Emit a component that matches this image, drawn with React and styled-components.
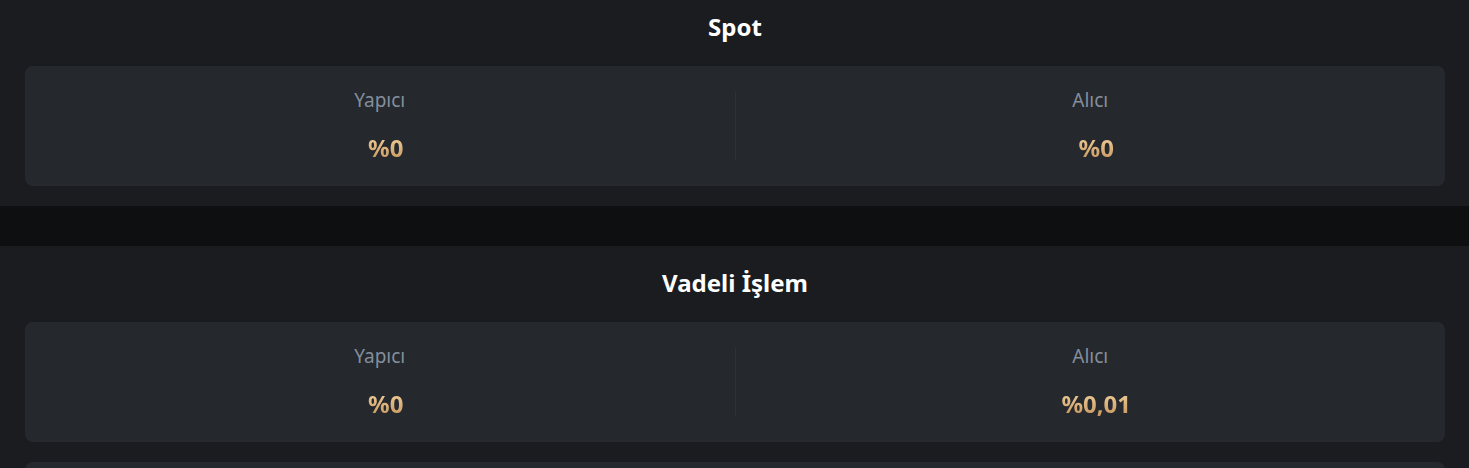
import React from 'react'
import styled, { createGlobalStyle } from 'styled-components'

const GlobalStyle = createGlobalStyle`
    html, body {
        margin: 0;
        padding: 0;
        background: #0e0f11;
        font-family: 'Noto Sans', 'Liberation Sans', Arial, sans-serif;
        overflow: hidden;
    }
`

const sections = [
    {
        id: 'spot',
        title: 'Spot',
        rows: [{ id: 1, maker: '%0', taker: '%0' }],
    },
    {
        id: 'futures',
        title: 'Vadeli İşlem',
        rows: [
            { id: 1, maker: '%0', taker: '%0,01' },
            { id: 2, maker: '%0,02', taker: '%0,05' },
        ],
    },
]

function App() {
    return (
        <>
            <GlobalStyle />
            <Page>
                {sections.map((section, i) => (
                    <Section key={section.id} first={i === 0}>
                        <Title>{section.title}</Title>
                        <CardList>
                            {section.rows.map((row) => (
                                <Card key={row.id}>
                                    <Column>
                                        <Label>Yapıcı</Label>
                                        <Value>{row.maker}</Value>
                                    </Column>
                                    <Divider />
                                    <Column>
                                        <Label>Alıcı</Label>
                                        <Value>{row.taker}</Value>
                                    </Column>
                                </Card>
                            ))}
                        </CardList>
                    </Section>
                ))}
            </Page>
        </>
    )
}

export default App

const Page = styled.div`
    display: flex;
    flex-direction: column;
    gap: 40px;
`

const Section = styled.section`
    background: #1b1c20;
    padding: ${(props) => (props.first ? '10px' : '20px')} 24px 20px 25px;
    display: flex;
    flex-direction: column;
    gap: 22px;
`

const Title = styled.h2`
    margin: 0;
    text-align: center;
    color: #ffffff;
    font-size: 24px;
    line-height: 34px;
    font-weight: 700;
`

const CardList = styled.div`
    display: flex;
    flex-direction: column;
    gap: 20px;
`

const Card = styled.div`
    background: #25282d;
    border-radius: 8px;
    height: 120px;
    display: flex;
    align-items: center;
`

const Column = styled.div`
    flex: 1;
    display: flex;
    flex-direction: column;
    align-items: center;
    gap: 20px;
`

const Divider = styled.div`
    width: 1px;
    height: 68px;
    background: #2e3138;
`

const Label = styled.div`
    color: #848e9c;
    font-size: 19px;
    line-height: 24px;
`

const Value = styled.div`
    padding-left: 12px;
    font-size: 24px;
    line-height: 32px;
    font-weight: 700;
    background: linear-gradient(180deg, #f5d7a4 0%, #c28f57 100%);
    -webkit-background-clip: text;
    background-clip: text;
    color: transparent;
`
